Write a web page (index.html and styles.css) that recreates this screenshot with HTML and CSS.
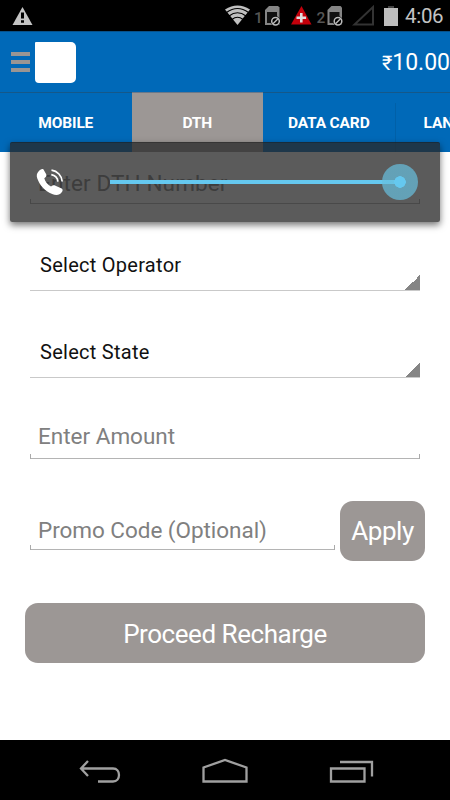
FILE: index.html
```
<!DOCTYPE html>
<html lang="en">
<head>
<meta charset="utf-8">
<title>DTH Recharge</title>
<link rel="stylesheet" href="styles.css">
</head>
<body>
<div class="phone">
  <header class="status">
    <svg class="alert" width="22" height="20" viewBox="0 0 22 20"><path d="M10.500 1 20.500 19H0.500z" fill="#c4c4c4"/><path d="M9 6.500h3v6H9zM9 14.300h3v2.500H9z" fill="#000"/></svg>
    <svg class="signals" width="155" height="31" viewBox="225 0 155 31">
      <path d="M225 9.500Q237.500 1.500 250 9.500L237.500 25z" fill="#c0c0c0"/>
      <g fill="none" stroke="#000" stroke-width="1.100">
        <path d="M226.500 12.500Q237.500 4.500 248.500 12.500"/><path d="M229 16Q237.500 9.500 246 16"/><path d="M232 19.500Q237.500 15 243 19.500"/>
      </g>
      <g id="sim">
        <path d="M269 6h9l1.500 1.500V25H265V10z" fill="#858585"/>
        <path d="M267 12h10v11h-10z" fill="#111"/>
        <circle cx="275.500" cy="21.300" r="5" fill="#000"/>
        <circle cx="275.500" cy="21.300" r="3.800" fill="none" stroke="#bbb" stroke-width="1.500"/><path d="m273 23.800 5-5" stroke="#bbb" stroke-width="1.500"/>
      </g>
      <use href="#sim" x="62.500"/>
      <path d="M301.500 6 311.500 24.500H291z" fill="#c3000b"/><path d="M301.300 13v9.500M296.500 17.700h9.600" stroke="#ddd" stroke-width="2.600"/>
      <path d="M373 7v17.500h-18.500z" fill="none" stroke="#333" stroke-width="2"/>
      <g fill="#555" font-family="Roboto" font-size="15.500" font-weight="500"><text x="254" y="23">1</text><text x="316.500" y="23">2</text></g>
    </svg>
    <svg class="battery" width="14" height="20" viewBox="0 0 14 20"><path d="M0 2h14v18H0z" fill="#bdbdbd"/><path d="M4 0h6v2H4z" fill="#444"/></svg>
    <span class="clock">4:06</span>
  </header>
  <div class="appbar">
    <div class="burger"><i></i><i></i><i></i></div>
    <div class="logo"></div>
    <span class="balance"><span class="rupee">₹</span>10.00</span>
  </div>
  <nav class="tabs">
    <div class="tab"><span>MOBILE</span></div>
    <div class="tab active"><span>DTH</span></div>
    <div class="tab"><span>DATA CARD</span></div>
    <div class="tab divided"><span>LANDLINE</span></div>
  </nav>
  <main class="form">
    <div class="field number"><span>Enter DTH Number</span></div>
    <div class="select"><span>Select Operator</span></div>
    <div class="select state"><span>Select State</span></div>
    <div class="field amount"><span>Enter Amount</span></div>
    <div class="promo">
      <div class="field code"><span>Promo Code (Optional)</span></div>
      <div class="button apply"><span>Apply</span></div>
    </div>
    <div class="button proceed"><span>Proceed Recharge</span></div>
  </main>
  <footer class="navbar">
    <svg width="450" height="60" viewBox="0 740 450 60" fill="none" stroke="#a0a0a0" stroke-width="2.300">
      <path d="m88 761-7 7.500 7 7.500M81 768.500h32c8 0 8 13 0 13H98"/>
      <path d="M203.500 781.500v-14l21.500-7.500 21.500 7.500v14z"/>
      <path d="M331 768.500h33.500v13H331zM340 762h32v14.500"/>
    </svg>
  </footer>
  <div class="volume">
    <svg class="call" width="28" height="28" viewBox="0 0 28 28"><path d="M2.500 3.500C4 1.500 6.500.3 7.500 1.500l2.700 4.800c.6 1.700 0 2.900-1.900 3.900.8 3.500 3.300 6.500 6.700 8.400 1.800-1.500 2.900-1.700 4.500-.9l6.200 2.700c1.300.8 1.200 2.300 0 3.900-2 2.900-5.600 3.500-9.600 1.600C8.700 23.300 3.500 16.800 1.300 10.600.3 7.500.8 5.200 2.500 3.500z" fill="#fff"/><path d="M15.500 2.200c6 .8 10.300 5.500 10.700 11.300M15.300 6.600c3.600.6 6.200 3.400 6.600 7" fill="none" stroke="#fff" stroke-width="1.700"/></svg>
    <div class="track"><div class="thumb"></div></div>
  </div>
</div>
</body>
</html>
```
FILE: styles.css
```
* { box-sizing: border-box; }
body { margin: 0; font-family: Roboto, "Noto Sans", sans-serif; }
.phone { position: relative; width: 450px; height: 800px; overflow: hidden; background: #fff; display: flex; flex-direction: column; }
.status { height: 31px; background: #000; display: flex; align-items: center; flex: none; }
.alert { margin: 0 191px 0 12px; }
.battery { margin-left: 4px; }
.clock { margin-left: 7px; padding-top: 2px; color: #c3c3c3; font-size: 20.500px; letter-spacing: -.3px; line-height: 29px; white-space: nowrap; }
.appbar { height: 61px; flex: none; background: #0069b8; border-top: 1px solid #07518a; display: flex; align-items: center; padding-left: 11px; }
.burger { width: 19px; display: grid; gap: 4px; }
.burger i { height: 4px; background: #999593; }
.logo { width: 41px; height: 41px; margin-left: 5px; background: #fff; border-radius: 1px 5px 5px 4px; }
.balance { margin-left: auto; color: #fff; font-size: 23px; white-space: nowrap; }
.rupee { font-size: 20px; }
.tabs { height: 60px; flex: none; display: grid; grid-template-columns: 131.500px 131.500px 131.500px 135px; overflow: hidden; background: #0069b8; color: #fff; font-size: 15.500px; letter-spacing: -.15px; font-weight: 700; }
.tab { display: flex; align-items: center; justify-content: center; border-top: 1px solid #155889; }
.tab.active { background: #9c9795; border-top-color: #68788a; }
.divided { justify-content: flex-start; padding-left: 29px; background: linear-gradient(#0060a8, #0060a8) 0 10px / 1px 50px no-repeat; }
.form { height: 588px; flex: none; padding: 0 25px 0 30px; }
.field { color: #808080; font-size: 22.500px; display: flex; align-items: flex-end; padding-left: 8px; white-space: nowrap; background: linear-gradient(#aaa, #aaa) 0 100% / 1px 5px no-repeat, linear-gradient(#aaa, #aaa) 100% 100% / 1px 5px no-repeat, linear-gradient(#b4b4b4, #b4b4b4) 0 100% / 100% 1px no-repeat; line-height: 26px; }
.number, .amount { width: 390px; }
.number { height: 52px; padding-bottom: 8px; letter-spacing: .12px; }
.select { width: 390px; height: 87px; display: flex; align-items: flex-end; padding: 0 0 13px 10px; font-size: 20px; letter-spacing: .27px; line-height: 26px; color: #111; background: linear-gradient(135deg, transparent 50%, #858585 50%) 100% 71px / 15px 15px no-repeat, linear-gradient(#c9c9c9, #c9c9c9) 0 100% / 100% 1px no-repeat; }
.amount { height: 81px; padding-bottom: 10px; }
.promo { height: 60px; margin-top: 42px; display: flex; gap: 5px; }
.code { width: 305px; height: 49px; padding-bottom: 7px; letter-spacing: -.04px; }
.button { background: #9c9795; color: #fff; border-radius: 13px; display: flex; align-items: center; justify-content: center; font-size: 26px; letter-spacing: -.45px; height: 60px; }
.apply { width: 85px; }
.proceed { width: 400px; margin: 42px 0 0 -5px; padding-top: 1px; }
.navbar { height: 60px; flex: none; background: #000; }
.volume { position: absolute; left: 10px; top: 142px; width: 430px; height: 80px; display: flex; align-items: center; padding-left: 26px; border-radius: 2px; background: rgba(40, 40, 40, .76); box-shadow: 0 3px 7px rgba(0, 0, 0, .55), inset 0 1px rgba(0,0,0,.2); }
.call { flex: none; }
.track { width: 290px; height: 4px; margin-left: 46px; background: #65c8ef; display: flex; align-items: center; justify-content: flex-end; }
.thumb { width: 36px; height: 36px; margin-right: -18px; flex: none; border-radius: 50%; background: radial-gradient(circle, #65c8ef 0 5.500px, rgba(103, 191, 222, .7) 6px); }
```
